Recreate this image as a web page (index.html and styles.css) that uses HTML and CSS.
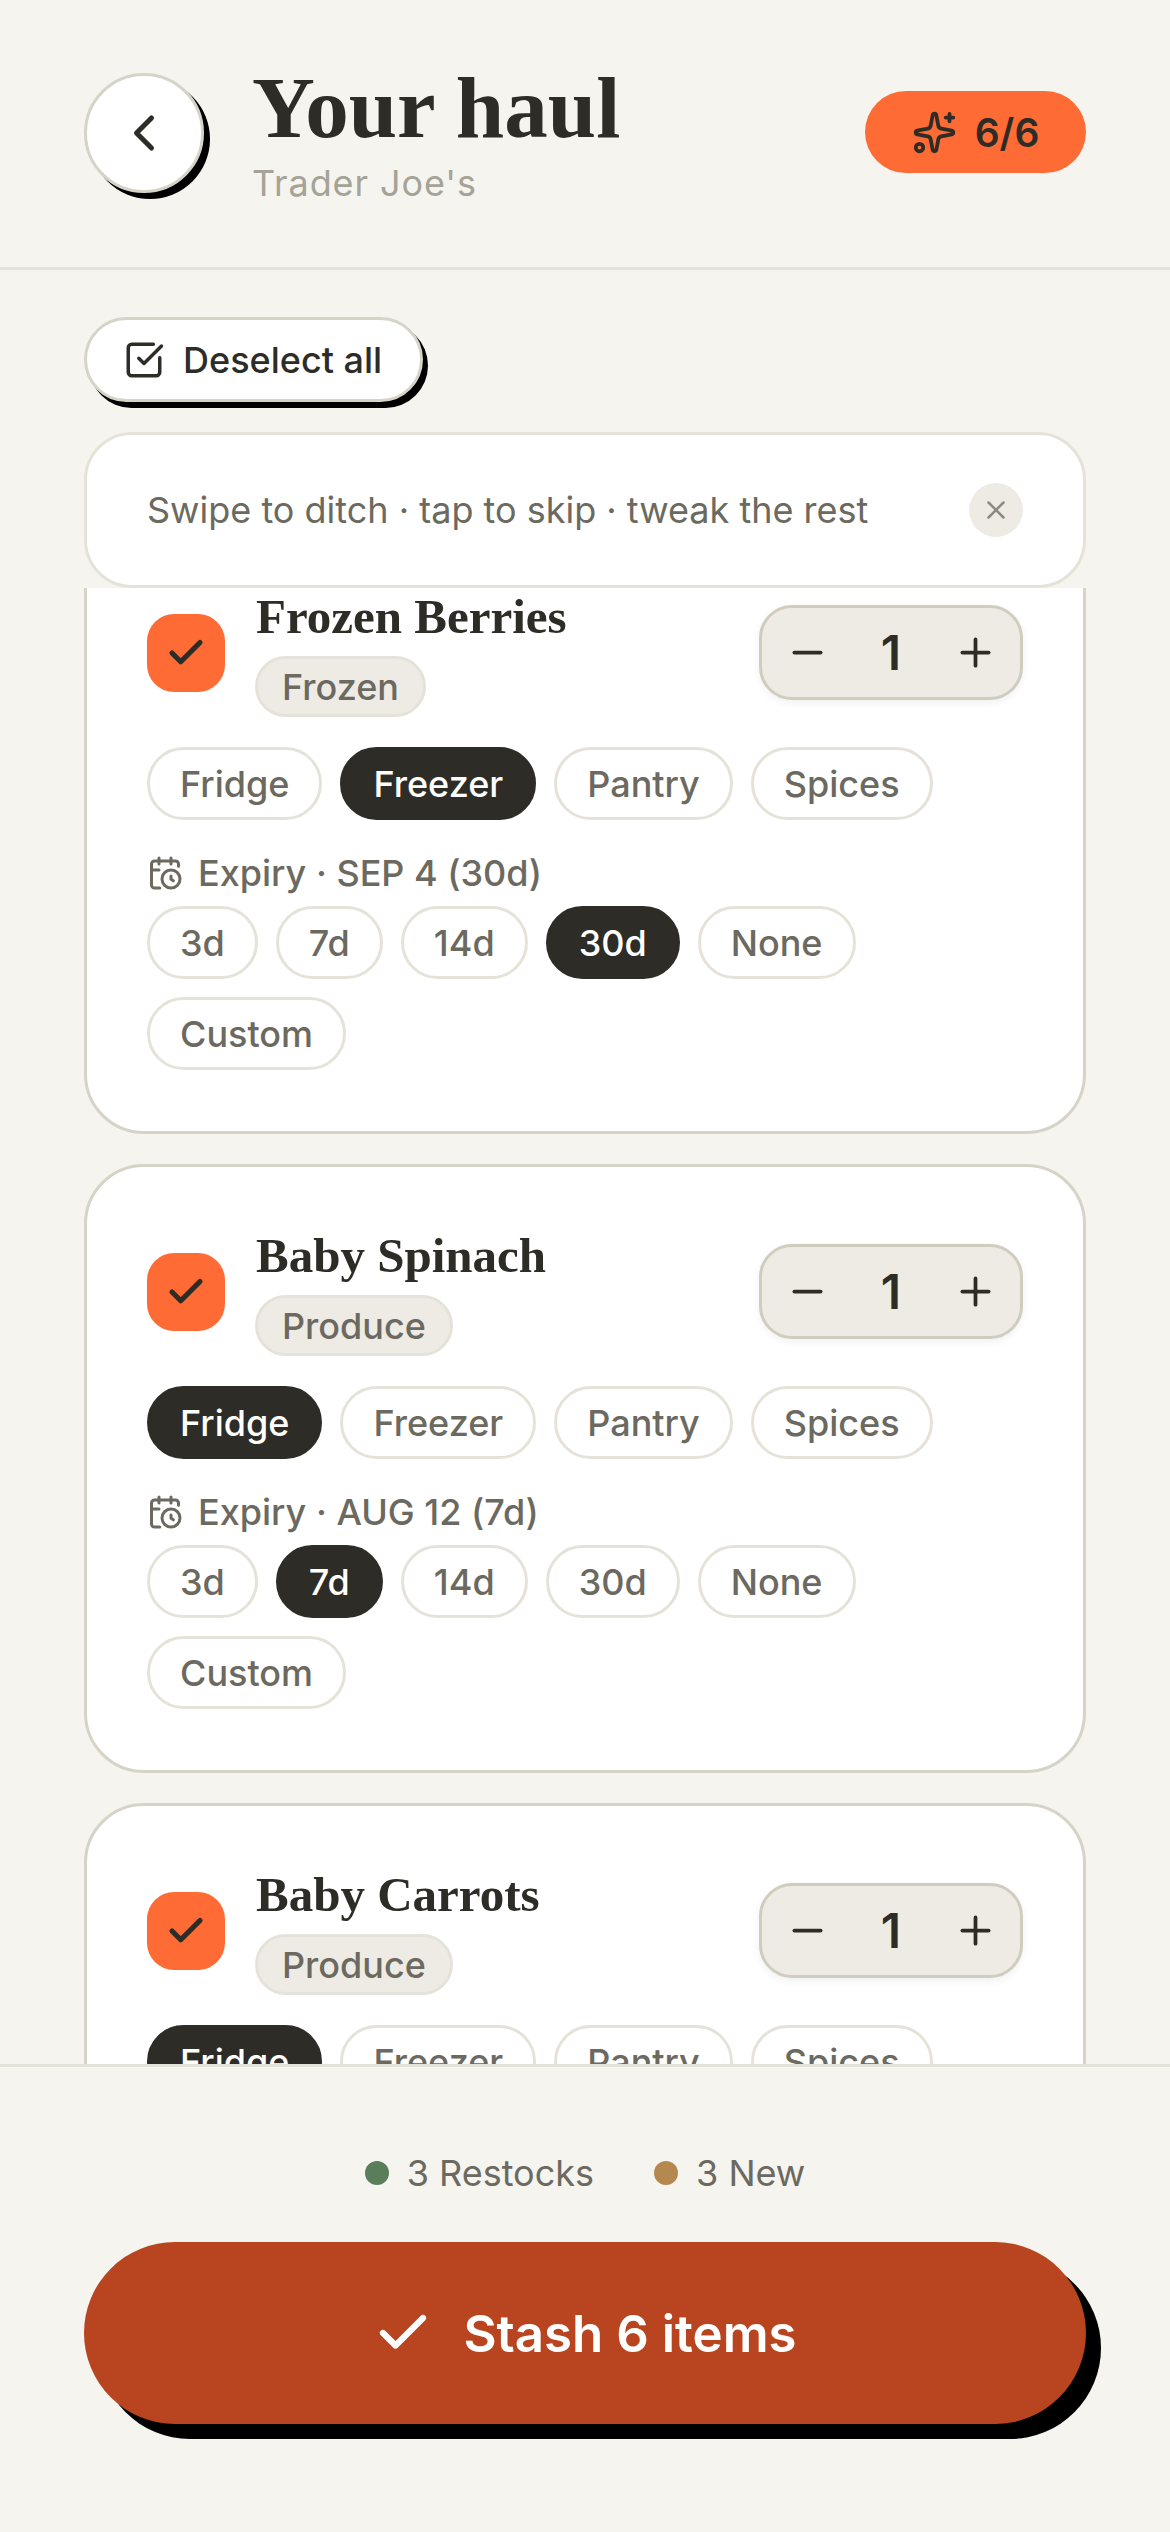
FILE: index.html
```html
<!DOCTYPE html>
<html lang="en">
<head>
<meta charset="utf-8">
<title>Your haul</title>
<link rel="stylesheet" href="styles.css">
</head>
<body>
<svg class="sprite" aria-hidden="true">
  <symbol id="i-check" viewBox="0 0 24 24"><path d="M20 6 9 17l-5-5"/></symbol>
  <symbol id="i-minus" viewBox="0 0 24 24"><path d="M5 12h14"/></symbol>
  <symbol id="i-plus" viewBox="0 0 24 24"><path d="M5 12h14"/><path d="M12 5v14"/></symbol>
  <symbol id="i-cal" viewBox="0 0 24 24"><path d="M16 14v2.2l1.6 1"/><path d="M16 2v4"/><path d="M21 7.5V6a2 2 0 0 0-2-2H5a2 2 0 0 0-2 2v14a2 2 0 0 0 2 2h3.5"/><path d="M3 10h5"/><path d="M8 2v4"/><circle cx="16" cy="16" r="6"/></symbol>
</svg>
<div class="screen">
  <header class="top">
    <button class="back"><svg class="ic-back" viewBox="0 0 24 24"><path d="m15 18-6-6 6-6"/></svg></button>
    <div class="heading">
      <h1>Your haul</h1>
      <p>Trader Joe's</p>
    </div>
    <div class="badge">
      <svg class="ic-spark" viewBox="0 0 24 24"><path d="M11.017 2.814a1 1 0 0 1 1.966 0l1.051 5.558a2 2 0 0 0 1.594 1.594l5.558 1.051a1 1 0 0 1 0 1.966l-5.558 1.051a2 2 0 0 0-1.594 1.594l-1.051 5.558a1 1 0 0 1-1.966 0l-1.051-5.558a2 2 0 0 0-1.594-1.594l-5.558-1.051a1 1 0 0 1 0-1.966l5.558-1.051a2 2 0 0 0 1.594-1.594z"/><path d="M20 2v4"/><path d="M22 4h-4"/><circle cx="4" cy="20" r="2"/></svg>
      <span>6/6</span>
    </div>
  </header>

  <main class="body">
    <div class="tools">
      <button class="deselect"><svg class="ic-square" viewBox="0 0 24 24"><path d="M21 10.656V19a2 2 0 0 1-2 2H5a2 2 0 0 1-2-2V5a2 2 0 0 1 2-2h12.344"/><path d="m9 11 3 3L22 4"/></svg><span>Deselect all</span></button>
      <div class="hint">
        <span>Swipe to ditch · tap to skip · tweak the rest</span>
        <button class="hint-x"><svg class="ic-x" viewBox="0 0 24 24"><path d="M18 6 6 18"/><path d="m6 6 12 12"/></svg></button>
      </div>
    </div>

    <div class="list">
      <article class="card first">
        <div class="row">
          <span class="box"><svg class="ic-tick"><use href="#i-check"/></svg></span>
          <div class="info"><h2>Frozen Berries</h2><span class="tag">Frozen</span></div>
          <div class="stepper"><button class="step"><svg class="ic-step"><use href="#i-minus"/></svg></button><span class="qty">1</span><button class="step"><svg class="ic-step"><use href="#i-plus"/></svg></button></div>
        </div>
        <div class="pills locs"><span class="pill">Fridge</span><span class="pill on">Freezer</span><span class="pill">Pantry</span><span class="pill">Spices</span></div>
        <div class="expiry"><svg class="ic-cal"><use href="#i-cal"/></svg><span>Expiry · SEP 4 (30d)</span></div>
        <div class="pills"><span class="pill">3d</span><span class="pill">7d</span><span class="pill">14d</span><span class="pill on">30d</span><span class="pill">None</span><span class="pill">Custom</span></div>
      </article>

      <article class="card">
        <div class="row">
          <span class="box"><svg class="ic-tick"><use href="#i-check"/></svg></span>
          <div class="info"><h2>Baby Spinach</h2><span class="tag">Produce</span></div>
          <div class="stepper"><button class="step"><svg class="ic-step"><use href="#i-minus"/></svg></button><span class="qty">1</span><button class="step"><svg class="ic-step"><use href="#i-plus"/></svg></button></div>
        </div>
        <div class="pills locs"><span class="pill on">Fridge</span><span class="pill">Freezer</span><span class="pill">Pantry</span><span class="pill">Spices</span></div>
        <div class="expiry"><svg class="ic-cal"><use href="#i-cal"/></svg><span>Expiry · AUG 12 (7d)</span></div>
        <div class="pills"><span class="pill">3d</span><span class="pill on">7d</span><span class="pill">14d</span><span class="pill">30d</span><span class="pill">None</span><span class="pill">Custom</span></div>
      </article>

      <article class="card">
        <div class="row">
          <span class="box"><svg class="ic-tick"><use href="#i-check"/></svg></span>
          <div class="info"><h2>Baby Carrots</h2><span class="tag">Produce</span></div>
          <div class="stepper"><button class="step"><svg class="ic-step"><use href="#i-minus"/></svg></button><span class="qty">1</span><button class="step"><svg class="ic-step"><use href="#i-plus"/></svg></button></div>
        </div>
        <div class="pills locs"><span class="pill on">Fridge</span><span class="pill">Freezer</span><span class="pill">Pantry</span><span class="pill">Spices</span></div>
      </article>
    </div>
  </main>

  <footer class="foot">
    <div class="legend">
      <span class="key"><i class="dot green"></i>3 Restocks</span>
      <span class="key"><i class="dot tan"></i>3 New</span>
    </div>
    <button class="stash"><svg class="ic-stash"><use href="#i-check"/></svg><span>Stash 6 items</span></button>
  </footer>
</div>
</body>
</html>
```
FILE: styles.css
```css
* { box-sizing: border-box; margin: 0; padding: 0; }
html, body { width: 1170px; height: 2532px; overflow: hidden; }
body { background: #f5f4ef; color: #2d2c26; font-family: "Inter", "Liberation Sans", sans-serif; }
button { font: inherit; color: inherit; background: none; border: 0; }
svg { fill: none; stroke: currentColor; stroke-width: 2; stroke-linecap: round; stroke-linejoin: round; display: block; flex: none; }
.sprite { width: 0; height: 0; position: absolute; }

.screen { height: 2532px; display: flex; flex-direction: column; }

/* Header */
.top { height: 270px; flex: none; padding: 73px 84px 0; border-bottom: 3px solid #e5e3d9; display: flex; align-items: flex-start; }
.back { width: 120px; height: 120px; border-radius: 50%; background: #fff; border: 3px solid #d6d3c7; box-shadow: 6px 6px 0 #000; display: flex; align-items: center; justify-content: center; flex: none; }
.ic-back { width: 60px; height: 60px; }
.heading { margin-left: 48px; flex: 1; margin-top: -13px; }
h1 { font-family: "Liberation Serif", serif; font-weight: 700; font-size: 87px; line-height: 96px; color: #2d2c26; }
.heading p { font-size: 36px; line-height: 48px; color: #a5a397; letter-spacing: 0.9px; margin-top: 3px; }
.badge { margin-top: 18px; width: 221px; height: 82px; border-radius: 41px; background: #ff6b35; display: flex; align-items: center; justify-content: center; gap: 18px; font-size: 39px; font-weight: 600; }
.ic-spark { width: 45px; height: 45px; }

/* Body */
.body { flex: 1; min-height: 0; display: flex; flex-direction: column; }
.tools { flex: none; padding: 47px 84px 0; display: flex; flex-direction: column; align-items: flex-start; gap: 30px; position: relative; z-index: 1; }
.deselect { height: 85px; padding: 0 38px 0 36px; border-radius: 43px; background: #fff; border: 3px solid #d6d3c7; box-shadow: 5px 6px 0 #000; display: flex; align-items: center; gap: 18px; font-size: 36px; font-weight: 500; }
.ic-square { width: 42px; height: 42px; }
.hint { width: 100%; height: 156px; border-radius: 48px; background: #fff; border: 3px solid #e5e3d9; padding: 0 60px; display: flex; align-items: center; justify-content: space-between; font-size: 36px; color: #6b6960; }
.hint-x { width: 54px; height: 54px; border-radius: 50%; background: #eeebe5; display: flex; align-items: center; justify-content: center; color: #8d8b80; }
.ic-x { width: 30px; height: 30px; }

.list { flex: 1; min-height: 0; overflow: hidden; padding: 0 84px; display: flex; flex-direction: column; gap: 30px; }
.card { flex: none; background: #fff; border: 3px solid #d6d3c7; border-radius: 60px; padding: 60px 60px 61px; }
.card.first { margin-top: -63px; }

.row { display: flex; align-items: center; height: 129px; }
.box { width: 78px; height: 78px; border-radius: 27px; background: #ff6b35; display: flex; align-items: center; justify-content: center; flex: none; }
.ic-tick { width: 42px; height: 42px; stroke-width: 3; }
.info { flex: 1; margin-left: 30px; display: flex; flex-direction: column; align-items: flex-start; gap: 10px; }
h2 { font-family: "Liberation Serif", serif; font-weight: 700; font-size: 49px; line-height: 58px; margin-left: 1px; }
.tag { height: 61px; padding: 0 24px; border-radius: 31px; background: #eeebe5; border: 3px solid #e5e3d9; display: flex; align-items: center; font-size: 36px; font-weight: 500; color: #6b6960; }
.stepper { width: 264px; height: 95px; border-radius: 33px; background: #eeebe5; border: 3px solid #d0cdbf; box-shadow: 0 3px 9px rgba(0,0,0,.06); display: flex; align-items: center; flex: none; }
.step { width: 90px; height: 89px; display: flex; align-items: center; justify-content: center; flex: none; }
.ic-step { width: 45px; height: 45px; }
.qty { flex: 1; text-align: center; font-size: 48px; font-weight: 600; }

.pills { display: flex; flex-wrap: wrap; gap: 18px; }
.locs { margin-top: 30px; }
.pill { height: 73px; padding: 0 30px; border-radius: 37px; border: 3px solid #e5e3d9; display: flex; align-items: center; font-size: 36px; font-weight: 500; color: #6b6960; background: #fff; }
.pill.on { background: #2d2c26; border-color: #2d2c26; color: #fff; }
.expiry { display: flex; align-items: center; gap: 15px; height: 50px; margin: 28px 0 8px; font-size: 36px; font-weight: 500; color: #6b6960; }
.ic-cal { width: 36px; height: 36px; }

/* Footer */
.foot { flex: none; height: 468px; border-top: 3px solid #e5e3d9; padding: 36px 84px 0; background: #f5f4ef; position: relative; z-index: 1; display: flex; flex-direction: column; align-items: center; }
.legend { height: 139px; flex: none; display: flex; align-items: center; justify-content: center; gap: 60px; font-size: 36px; color: #6b6960; }
.key { display: flex; align-items: center; gap: 18px; }
.dot { width: 24px; height: 24px; border-radius: 50%; }
.green { background: #5a7d5a; }
.tan { background: #b58850; }
.stash { width: 100%; height: 182px; flex: none; border-radius: 91px; background: #b8451f; box-shadow: 15px 15px 0 #000; display: flex; align-items: center; justify-content: center; gap: 30px; color: #fff; font-size: 51px; font-weight: 600; }
.ic-stash { width: 60px; height: 60px; stroke-width: 2.5; }
```
